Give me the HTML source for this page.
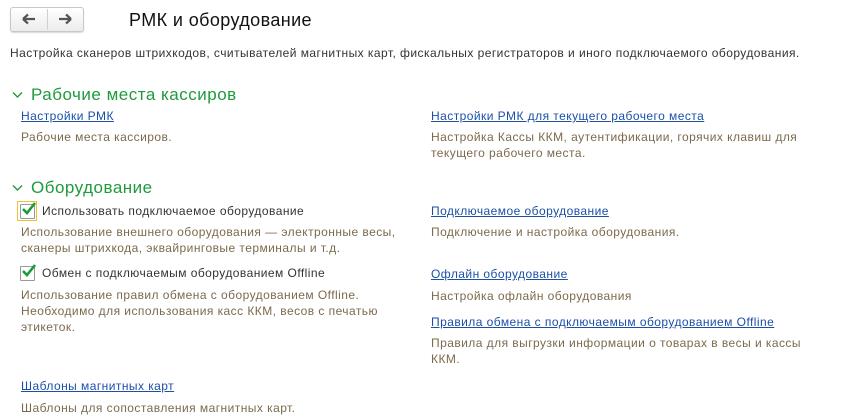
<!DOCTYPE html>
<html><head><meta charset="utf-8"><style>
body{margin:0;width:858px;height:417px;background:#fff;font-family:"Liberation Sans",Arial,sans-serif;font-size:12px;letter-spacing:0.45px;position:relative;overflow:hidden;color:#333}
.a{position:absolute;white-space:nowrap;line-height:16px}
.l{color:#1c4fa6;text-decoration:underline}
.d{color:#7b6a4c}
.h{color:#1f9a3c;font-size:17px;line-height:18px;letter-spacing:0.5px}
.cb{position:absolute;width:13px;height:13px;border:1px solid #999;background:#fff;border-radius:1px}
</style></head><body>
<div style="position:absolute;left:10px;top:7px;width:72px;height:23px;border:1px solid #c8c8c8;border-radius:3px;background:linear-gradient(#fff,#ececec);box-shadow:0 1px 1px rgba(0,0,0,.15)">
<div style="position:absolute;left:36px;top:1px;width:1px;height:21px;background:#d0d0d0"></div>
<svg style="position:absolute;left:11px;top:5px" width="14" height="12" viewBox="0 0 14 12"><path d="M1 6H13M1 6L6 1.5M1 6L6 10.5" stroke="#555" stroke-width="2.2" fill="none"/></svg>
<svg style="position:absolute;left:47px;top:5px" width="14" height="12" viewBox="0 0 14 12"><path d="M1 6H13M13 6L8 1.5M13 6L8 10.5" stroke="#555" stroke-width="2.2" fill="none"/></svg>
</div>
<div class="a" style="left:129px;top:9px;font-size:18px;line-height:22px;color:#111;letter-spacing:0.4px">РМК и оборудование</div>
<div class="a" style="left:10px;top:45px">Настройка сканеров штрихкодов, считывателей магнитных карт, фискальных регистраторов и иного подключаемого оборудования.</div>

<svg style="position:absolute;left:12px;top:91px" width="11" height="8"><path d="M1 1.5L5.5 6L10 1.5" stroke="#1f9a3c" stroke-width="1.4" fill="none"/></svg>
<div class="a h" style="left:31px;top:86px">Рабочие места кассиров</div>
<div class="a l" style="left:21px;top:108px">Настройки РМК</div>
<div class="a d" style="left:21px;top:129px">Рабочие места кассиров.</div>
<div class="a l" style="left:431px;top:108px">Настройки РМК для текущего рабочего места</div>
<div class="a d" style="left:431px;top:129px">Настройка Кассы ККМ, аутентификации, горячих клавиш для<br>текущего рабочего места.</div>

<svg style="position:absolute;left:12px;top:184px" width="11" height="8"><path d="M1 1.5L5.5 6L10 1.5" stroke="#1f9a3c" stroke-width="1.4" fill="none"/></svg>
<div class="a h" style="left:31px;top:179px">Оборудование</div>
<div style="position:absolute;left:17px;top:201px;width:20px;height:20px;border:1px solid #f0c030;box-sizing:border-box"></div>
<div class="cb" style="left:20px;top:204px"></div>
<svg style="position:absolute;left:21px;top:201px" width="16" height="15"><path d="M2 8L6 12L14 2" stroke="#1c9a3a" stroke-width="2.6" fill="none"/></svg>
<div class="a" style="left:42px;top:203px">Использовать подключаемое оборудование</div>
<div class="a d" style="left:21px;top:224px">Использование внешнего оборудования — электронные весы,<br>сканеры штрихкода, эквайринговые терминалы и т.д.</div>
<div class="cb" style="left:20px;top:266px"></div>
<svg style="position:absolute;left:21px;top:263px" width="16" height="15"><path d="M2 8L6 12L14 2" stroke="#1c9a3a" stroke-width="2.6" fill="none"/></svg>
<div class="a" style="left:42px;top:265px">Обмен с подключаемым оборудованием Offline</div>
<div class="a d" style="left:21px;top:287px">Использование правил обмена с оборудованием Offline.<br>Необходимо для использования касс ККМ, весов с печатью<br>этикеток.</div>
<div class="a l" style="left:21px;top:378px">Шаблоны магнитных карт</div>
<div class="a d" style="left:21px;top:400px">Шаблоны для сопоставления магнитных карт.</div>

<div class="a l" style="left:431px;top:203px">Подключаемое оборудование</div>
<div class="a d" style="left:431px;top:224px">Подключение и настройка оборудования.</div>
<div class="a l" style="left:431px;top:266px">Офлайн оборудование</div>
<div class="a d" style="left:431px;top:288px">Настройка офлайн оборудования</div>
<div class="a l" style="left:431px;top:314px">Правила обмена с подключаемым оборудованием Offline</div>
<div class="a d" style="left:431px;top:335px">Правила для выгрузки информации о товарах в весы и кассы<br>ККМ.</div>
</body></html>
